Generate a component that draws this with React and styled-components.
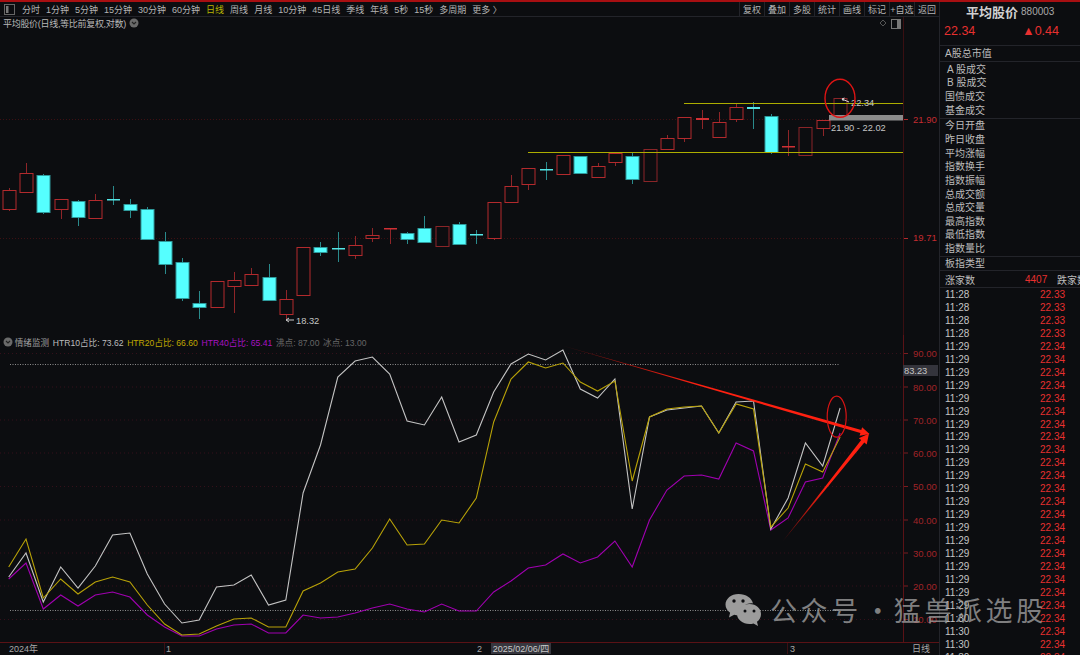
import styled, { createGlobalStyle } from "styled-components";

const GlobalStyle = createGlobalStyle`
    html, body {
        margin: 0;
        padding: 0;
        background: #0c0d10;
    }
    * {
        box-sizing: border-box;
    }
`;

const FIRST_X = 8.7;
const STEP = 17.32;
const xAt = (i) => FIRST_X + STEP * i;

// kind, body top, body bottom, wick top, wick bottom, dim
const CANDLES = [
    ["r", 190, 209, 188, 211], ["r", 173, 192, 163, 192], ["c", 175, 212, 174, 214], ["r", 199, 209, 199, 219],
    ["c", 201, 217, 200, 226], ["r", 200, 218, 194, 218], ["c", 199, 200, 186, 205], ["c", 204, 210, 199, 218],
    ["c", 209, 239, 207, 239], ["c", 241, 264, 232, 274], ["c", 262, 298, 258, 301], ["c", 303, 307, 291, 319],
    ["r", 281, 307, 281, 308], ["r", 280, 286, 272, 313], ["r", 274, 285, 268, 286], ["c", 277, 300, 264, 301],
    ["r", 299, 314, 290, 319], ["r", 247, 295, 247, 295], ["c", 247, 252, 242, 256], ["c", 248, 249, 232, 262],
    ["r", 245, 255, 236, 259], ["r", 235, 238, 228, 242], ["r", 228, 229, 228, 244], ["c", 233, 239, 232, 244],
    ["c", 228, 242, 216, 242], ["r", 226, 246, 226, 246, 1], ["c", 224, 244, 222, 245], ["c", 234, 235, 230, 244],
    ["r", 202, 238, 202, 240], ["r", 186, 202, 175, 203], ["r", 168, 184, 168, 190], ["c", 169, 170, 162, 180],
    ["r", 155, 174, 155, 175], ["c", 156, 173, 156, 174], ["r", 166, 177, 163, 178], ["r", 153, 162, 153, 166],
    ["c", 156, 179, 153, 184], ["r", 149, 181, 149, 181, 1], ["r", 138, 149, 135, 150], ["r", 117, 138, 117, 142],
    ["r", 118, 120, 110, 129], ["r", 122, 137, 112, 138], ["r", 107, 119, 104, 122], ["c", 107, 109, 102, 129],
    ["c", 116, 152, 114, 154], ["r", 146, 147, 130, 156], ["r", 127, 155, 127, 155, 1], ["r", 120, 128, 120, 136],
    ["r", 98, 117, 98, 117, 1]
];

const WHITE = [
    577, 553, 602, 567, 588, 566, 535, 533, 574, 604, 623, 620, 587, 585, 575, 605, 600, 493, 445, 377, 361, 357, 374, 421,
    425, 397, 442, 435, 392, 364, 354, 360, 350, 389, 398, 379, 509, 417, 410, 408, 406, 433, 402, 401, 529, 498, 443, 466, 408
];
const YELLOW = [
    567, 539, 598, 579, 594, 582, 577, 582, 605, 624, 635, 634, 626, 619, 618, 627, 627, 591, 583, 572, 569, 548, 519, 545,
    544, 520, 523, 498, 422, 379, 362, 368, 363, 382, 391, 381, 481, 417, 409, 407, 406, 433, 404, 409, 527, 508, 464, 472, 437
];
const PURPLE = [
    579, 563, 609, 595, 606, 595, 592, 597, 615, 627, 636, 636, 629, 625, 624, 633, 633, 615, 618, 617, 613, 608, 604, 609,
    612, 604, 611, 611, 592, 581, 568, 565, 554, 563, 557, 541, 567, 520, 490, 476, 475, 479, 443, 451, 530, 518, 482, 478, 433
];

const GRID_LOWER = [
    [353.5, "90.00"], [387, "80.00"], [420, "70.00"], [453, "60.00"], [486.5, "50.00"],
    [520, "40.00"], [553, "30.00"], [586, "20.00"], [619.5, "10.00"]
];

const PERIODS = [
    "分时", "1分钟", "5分钟", "15分钟", "30分钟", "60分钟", "日线", "周线", "月线", "10分钟",
    "45日线", "季线", "年线", "5秒", "15秒", "多周期", "更多 〉"
];
const ACTIONS = ["复权", "叠加", "多股", "统计", "画线", "标记", "+自选", "返回"];

const STATS_A = ["A 股成交", "B 股成交", "国债成交", "基金成交"];
const STATS_B = [
    "今日开盘", "昨日收盘", "平均涨幅", "指数换手", "指数振幅",
    "总成交额", "总成交量", "最高指数", "最低指数", "指数量比"
];

const TICKS = Array.from({ length: 29 }, (_, i) => ({
    time: i < 4 ? "11:28" : i < 25 ? "11:29" : "11:30",
    price: i < 4 ? "22.33" : "22.34"
}));

function toPoints(list) {
    return list.map((y, i) => `${xAt(i).toFixed(1)},${y}`).join(" ");
}

// thin at the tail, widening up to the arrow head
function arrowPoints(x1, y1, x2, y2, width, headLength, headWidth) {
    const len = Math.hypot(x2 - x1, y2 - y1);
    const ux = (x2 - x1) / len;
    const uy = (y2 - y1) / len;
    const nx = -uy;
    const ny = ux;
    const bx = x2 - ux * headLength;
    const by = y2 - uy * headLength;
    const pts = [
        [x1, y1],
        [bx + (nx * width) / 2, by + (ny * width) / 2],
        [bx + (nx * headWidth) / 2, by + (ny * headWidth) / 2],
        [x2, y2],
        [bx - (nx * headWidth) / 2, by - (ny * headWidth) / 2],
        [bx - (nx * width) / 2, by - (ny * width) / 2]
    ];
    return pts.map((p) => p.map((v) => v.toFixed(1)).join(",")).join(" ");
}

function Candle({ index, data }) {
    const [kind, top, bottom, wickTop, wickBottom, dim] = data;
    const x = Math.round(xAt(index));
    const isRed = kind === "r";
    const thin = bottom - top < 3;
    const border = isRed ? (dim ? "#8a2528" : "#b32a2d") : "#2f9a9c";
    const wick = isRed ? "#8f2528" : "#2a8a8c";

    return (
        <g>
            <line x1={x + 0.5} x2={x + 0.5} y1={wickTop} y2={wickBottom} stroke={wick} />
            {thin ? (
                <rect x={x - 6} y={top} width={13} height={Math.max(bottom - top, 1.5)} fill={isRed ? "#d03034" : "#55e6e6"} />
            ) : (
                <rect
                    x={x - 6}
                    y={top + 0.5}
                    width={13}
                    height={bottom - top}
                    fill={isRed ? "#0c0d10" : "#55ffff"}
                    stroke={border}
                />
            )}
        </g>
    );
}

function PriceChart() {
    return (
        <ChartSvg viewBox="0 17 939 318" width="939" height="318">
            <line x1="0" x2="903" y1="119.5" y2="119.5" stroke="#3d1013" strokeDasharray="1 2" />
            <line x1="0" x2="903" y1="238.5" y2="238.5" stroke="#3d1013" strokeDasharray="1 2" />
            <line x1="903.5" x2="903.5" y1="17" y2="335" stroke="#3a0f12" />
            <line x1="904" x2="908" y1="119.5" y2="119.5" stroke="#b32a2d" />
            <line x1="904" x2="908" y1="238.5" y2="238.5" stroke="#b32a2d" />
            <AxisLabel x="913" y="122.5">21.90</AxisLabel>
            <AxisLabel x="913" y="240.5">19.71</AxisLabel>

            <path d="M883 20l3 3-3 3-3-3z" fill="none" stroke="#555" />
            <rect x="891.5" y="19.5" width="9" height="9" fill="none" stroke="#777" />
            <rect x="897" y="20" width="3" height="8" fill="#777" />

            {CANDLES.map((c, i) => (
                <Candle key={i} index={i} data={c} />
            ))}

            <line x1="684" x2="903" y1="103.5" y2="103.5" stroke="#adad00" />
            <line x1="528" x2="903" y1="152.5" y2="152.5" stroke="#adad00" />

            <rect x="829" y="115" width="74" height="5.5" fill="#8c8c8c" />
            <ChartNote x="831" y="131">21.90 - 22.02</ChartNote>
            <path d="M849 102l-7-3m0 0l2.500-1m-2.500 1l1.500 2" fill="none" stroke="#d8d8d8" />
            <ChartNote x="851" y="106">22.34</ChartNote>
            <ellipse cx="840" cy="98.3" rx="15" ry="19" fill="none" stroke="#e01414" strokeWidth="1.4" />

            <path d="M294 320h-8m0 0l3-2m-3 2l3 2" fill="none" stroke="#c8c8c8" />
            <ChartNote x="296" y="323.500">18.32</ChartNote>
        </ChartSvg>
    );
}

function IndicatorChart() {
    return (
        <ChartSvg viewBox="0 335 939 307" width="939" height="307">
            <defs>
                <linearGradient id="fallArrow" gradientUnits="userSpaceOnUse" x1="562" y1="346" x2="869" y2="434">
                    <stop offset="0" stopColor="#5a0d0d" />
                    <stop offset="0.45" stopColor="#ff2010" />
                </linearGradient>
                <linearGradient id="riseArrow" gradientUnits="userSpaceOnUse" x1="783" y1="541" x2="869" y2="434">
                    <stop offset="0" stopColor="#5a0d0d" />
                    <stop offset="0.5" stopColor="#ff2010" />
                </linearGradient>
            </defs>

            {GRID_LOWER.map(([y, label]) => (
                <g key={label}>
                    <line x1="0" x2="903" y1={y} y2={y} stroke="#34101a" strokeDasharray="1 3" />
                    <line x1="904" x2="908" y1={y} y2={y} stroke="#7a1c20" />
                    <AxisLabel x="913" y={y + 3.5} $dim>{label}</AxisLabel>
                </g>
            ))}
            <line x1="903.5" x2="903.5" y1="335" y2="642" stroke="#5a1216" />

            <line x1="10" x2="840" y1="364.5" y2="364.5" stroke="#8c8c8c" strokeDasharray="1 1.5" />
            <line x1="10" x2="840" y1="610.5" y2="610.5" stroke="#8c8c8c" strokeDasharray="1 1.5" />

            <polyline points={toPoints(PURPLE)} fill="none" stroke="#a000b0" strokeWidth="1.1" />
            <polyline points={toPoints(WHITE)} fill="none" stroke="#c4c4c4" strokeWidth="1.1" />
            <polyline points={toPoints(YELLOW)} fill="none" stroke="#b8a208" strokeWidth="1.1" />

            <polygon points={arrowPoints(562, 345.5, 869.5, 434, 3.4, 9, 9)} fill="url(#fallArrow)" />
            <polygon points={arrowPoints(783, 541, 869, 433.5, 4, 10, 10)} fill="url(#riseArrow)" />
            <ellipse cx="836.7" cy="416.7" rx="9.5" ry="20.5" fill="none" stroke="#d81414" strokeWidth="1.2" />

            <rect x="903" y="365" width="35" height="11" fill="#34343c" />
            <ChartNote x="904" y="374">83.23</ChartNote>
        </ChartSvg>
    );
}

function ChevronBadge() {
    return (
        <svg width="10" height="10" viewBox="0 0 10 10">
            <circle cx="5" cy="5" r="4.5" fill="#6a6a6a" />
            <path d="M3 4l2 2 2-2" fill="none" stroke="#222" strokeWidth="1.1" />
        </svg>
    );
}

function WeChatMark() {
    return (
        <svg width="36" height="34" viewBox="0 0 36 34">
            <path d="M13.5 1C6.3 1 .5 5.7.5 11.6c0 3.3 1.8 6.2 4.6 8.2L4 24.4l5.2-2.7c1.3.4 2.8.6 4.3.6 1 0 1.9-.1 2.8-.3C15 14 21 9.6 28 10.400C26.900 5 21 1 13.500 1z" fill="#9c9c9c" />
            <path d="M24.500 11C17.700 11 12 15.500 12 21s5.700 10 12.500 10c1.400 0 2.800-.2 4-.6l4.500 2.600-1-4.200c2.700-1.800 4-4.800 4-7.800 0-5.500-4.700-10-11.500-10z" fill="#9c9c9c" />
            <circle cx="9" cy="8" r="1.700" fill="#0c0d10" />
            <circle cx="18" cy="8" r="1.700" fill="#0c0d10" />
            <circle cx="20" cy="18" r="1.500" fill="#0c0d10" />
            <circle cx="29" cy="18" r="1.500" fill="#0c0d10" />
        </svg>
    );
}

export default function App() {
    return (
        <Root>
            <GlobalStyle />
            <TopStripe />
            <Workspace>
                <Main>
                    <Toolbar>
                        <PeriodBar>
                            <svg width="11" height="11" viewBox="0 0 11 11">
                                <rect x="0.5" y="0.5" width="10" height="10" fill="none" stroke="#666" />
                                <rect x="2" y="2" width="2.5" height="7" fill="#777" />
                            </svg>
                            {PERIODS.map((p) => (
                                <Period key={p} $active={p === "日线"}>{p}</Period>
                            ))}
                        </PeriodBar>
                        <ActionBar>
                            {ACTIONS.map((a) => (
                                <Action key={a}>{a}</Action>
                            ))}
                        </ActionBar>
                    </Toolbar>

                    <Pane $height={318}>
                        <PaneTitle>
                            平均股价(日线,等比前复权,对数)
                            <ChevronBadge />
                        </PaneTitle>
                        <PriceChart />
                    </Pane>

                    <Pane $height={307}>
                        <Legend>
                            <ChevronBadge />
                            <LegendItem $color="#a0a0a0">情绪监测</LegendItem>
                            <LegendItem $color="#bdbdbd">HTR10占比: 73.62</LegendItem>
                            <LegendItem $color="#c0a800">HTR20占比: 66.60</LegendItem>
                            <LegendItem $color="#a812c0">HTR40占比: 65.41</LegendItem>
                            <LegendItem $color="#666">沸点: 87.00</LegendItem>
                            <LegendItem $color="#666">冰点: 13.00</LegendItem>
                        </Legend>
                        <IndicatorChart />
                    </Pane>

                    <DateAxis>
                        <DateCell $width={164} $pad={9}>2024年</DateCell>
                        <DateCell $width={313} $pad={1} $tick>1</DateCell>
                        <DateCell $width={14} $pad={0}>2</DateCell>
                        <DateBadge>2025/02/06/四</DateBadge>
                        <DateCell $width={236} $pad={236} />
                        <DateCell $width={116} $pad={2} $tick>3</DateCell>
                        <DateCell $width={36} $pad={9}>日线</DateCell>
                    </DateAxis>
                </Main>

                <Sidebar>
                    <NameRow>
                        <IndexName>平均股价</IndexName>
                        <IndexCode>880003</IndexCode>
                    </NameRow>
                    <QuoteRow>
                        <span>22.34</span>
                        <span>▲0.44</span>
                    </QuoteRow>
                    <StatGroup $height={16}>
                        <StatRow>A股总市值</StatRow>
                    </StatGroup>
                    <StatGroup $height={57}>
                        {STATS_A.map((s, i) => (
                            <StatRow key={s} $indent={i < 2}>{s}</StatRow>
                        ))}
                    </StatGroup>
                    <StatGroup $height={138}>
                        {STATS_B.map((s) => (
                            <StatRow key={s}>{s}</StatRow>
                        ))}
                    </StatGroup>
                    <StatGroup $height={14}>
                        <StatRow>板指类型</StatRow>
                    </StatGroup>
                    <BreadthRow>
                        <span>涨家数</span>
                        <BreadthValue>4407</BreadthValue>
                        <span>跌家数</span>
                    </BreadthRow>
                    <TickList>
                        {TICKS.map((t, i) => (
                            <TickRow key={i}>
                                <span>{t.time}</span>
                                <TickPrice>{t.price}</TickPrice>
                            </TickRow>
                        ))}
                    </TickList>
                </Sidebar>
            </Workspace>

            <Watermark>
                <WeChatMark />
                <WatermarkText $first>公众号</WatermarkText>
                <WatermarkDot>·</WatermarkDot>
                <WatermarkText>猛兽派选股</WatermarkText>
            </Watermark>
        </Root>
    );
}

const Root = styled.div`
    position: relative;
    width: 1080px;
    height: 655px;
    overflow: hidden;
    background: #0c0d10;
    color: #c0c0c0;
    font-family: "Liberation Sans", "Noto Sans CJK SC", sans-serif;
`;
const TopStripe = styled.div`
    height: 2px;
    background: #a80f12;
`;
const Workspace = styled.div`
    display: flex;
    height: 653px;
`;
const Main = styled.div`
    width: 940px;
    flex-shrink: 0;
    display: flex;
    flex-direction: column;
    border-right: 1px solid #23242a;
`;
const Toolbar = styled.div`
    height: 15px;
    display: flex;
    justify-content: space-between;
    align-items: stretch;
    border-bottom: 1px solid #23242a;
`;
const PeriodBar = styled.div`
    display: flex;
    align-items: center;
    gap: 6px;
    padding-left: 4px;
    font-size: 9px;
    > svg {
        margin-right: 1px;
    }
`;
const Period = styled.span`
    color: ${(props) => (props.$active ? "#b5b500" : "#b4b4b4")};
    white-space: nowrap;
`;
const ActionBar = styled.div`
    display: flex;
`;
const Action = styled.span`
    width: 25px;
    display: flex;
    align-items: center;
    justify-content: center;
    font-size: 9px;
    color: #b4b4b4;
    white-space: nowrap;
    border-left: 1px solid #23242a;
`;
const Pane = styled.div`
    position: relative;
    height: ${(props) => props.$height}px;
`;
const ChartSvg = styled.svg`
    display: block;
`;
const AxisLabel = styled.text`
    font-size: 9.5px;
    fill: ${(props) => (props.$dim ? "#a02428" : "#c42c30")};
`;
const ChartNote = styled.text`
    font-size: 9.3px;
    fill: #c4c4c4;
`;
const PaneTitle = styled.div`
    position: absolute;
    top: 0;
    left: 3px;
    height: 12px;
    display: flex;
    align-items: center;
    gap: 3px;
    font-size: 9px;
    letter-spacing: -0.3px;
    color: #b8b8b8;
    white-space: nowrap;
`;
const Legend = styled.div`
    position: absolute;
    top: 1px;
    left: 3px;
    height: 11px;
    display: flex;
    align-items: center;
    gap: 3.7px;
    font-size: 8.6px;
    white-space: nowrap;
    > svg {
        margin-right: -2px;
    }
`;
const LegendItem = styled.span`
    color: ${(props) => props.$color};
`;
const DateAxis = styled.div`
    height: 12px;
    display: flex;
    align-items: center;
    font-size: 9px;
    color: #a8a8a8;
    border-top: 1px solid #5a1216;
`;
const DateCell = styled.span`
    width: ${(props) => props.$width}px;
    height: 100%;
    display: flex;
    align-items: center;
    padding-left: ${(props) => props.$pad}px;
    border-left: ${(props) => (props.$tick ? "1px solid #3a1014" : "none")};
    white-space: nowrap;
`;
const DateBadge = styled.span`
    width: 60px;
    height: 100%;
    display: flex;
    align-items: center;
    justify-content: center;
    background: #36363e;
    color: #c8c8c8;
    white-space: nowrap;
`;
const Sidebar = styled.div`
    flex: 1;
    min-width: 0;
    display: flex;
    flex-direction: column;
    overflow: hidden;
`;
const NameRow = styled.div`
    height: 20px;
    flex-shrink: 0;
    display: flex;
    align-items: center;
    gap: 3px;
    padding: 0 0 2px 26px;
`;
const IndexName = styled.span`
    font-size: 13px;
    font-weight: 700;
    color: #d0d0d0;
`;
const IndexCode = styled.span`
    font-size: 10px;
    color: #a8a8a8;
`;
const QuoteRow = styled.div`
    height: 24px;
    flex-shrink: 0;
    display: flex;
    gap: 47px;
    align-items: center;
    padding: 0 0 5px 4px;
    font-size: 12.5px;
    color: #e8302f;
    border-bottom: 1px solid #23242a;
`;
const StatGroup = styled.div`
    height: ${(props) => props.$height}px;
    flex-shrink: 0;
    display: flex;
    flex-direction: column;
    justify-content: center;
    border-bottom: 1px solid #23242a;
`;
const StatRow = styled.div`
    height: 13.64px;
    flex-shrink: 0;
    line-height: 13.64px;
    padding-left: ${(props) => (props.$indent ? "7px" : "5px")};
    font-size: 10px;
    color: #bcbcbc;
    white-space: nowrap;
`;
const BreadthRow = styled.div`
    height: 17px;
    flex-shrink: 0;
    display: flex;
    align-items: center;
    padding-left: 5px;
    font-size: 10px;
    color: #bcbcbc;
    white-space: nowrap;
    border-bottom: 1px solid #23242a;
    > span {
        flex-shrink: 0;
    }
    > span:first-child {
        width: 80px;
    }
`;
const BreadthValue = styled.span`
    width: 32px;
    color: #e8302f;
`;
const TickList = styled.div`
    display: flex;
    flex-direction: column;
`;
const TickRow = styled.div`
    height: 12.96px;
    flex-shrink: 0;
    display: flex;
    align-items: center;
    padding-left: 5px;
    font-size: 10px;
    color: #c4c4c4;
    > span:first-child {
        width: 95px;
    }
`;
const TickPrice = styled.span`
    color: #e8302f;
`;
const Watermark = styled.div`
    position: absolute;
    left: 725px;
    top: 593px;
    display: flex;
    align-items: center;
    pointer-events: none;
    font-family: "Noto Sans CJK SC", sans-serif;
    color: rgba(160, 160, 160, 0.78);
`;
const WatermarkText = styled.span`
    margin-left: ${(props) => (props.$first ? "9px" : "0")};
    font-size: 27px;
    letter-spacing: 3.6px;
    line-height: 34px;
    white-space: nowrap;
`;
const WatermarkDot = styled.span`
    font-size: 27px;
    line-height: 34px;
    width: 32px;
    text-align: center;
`;
